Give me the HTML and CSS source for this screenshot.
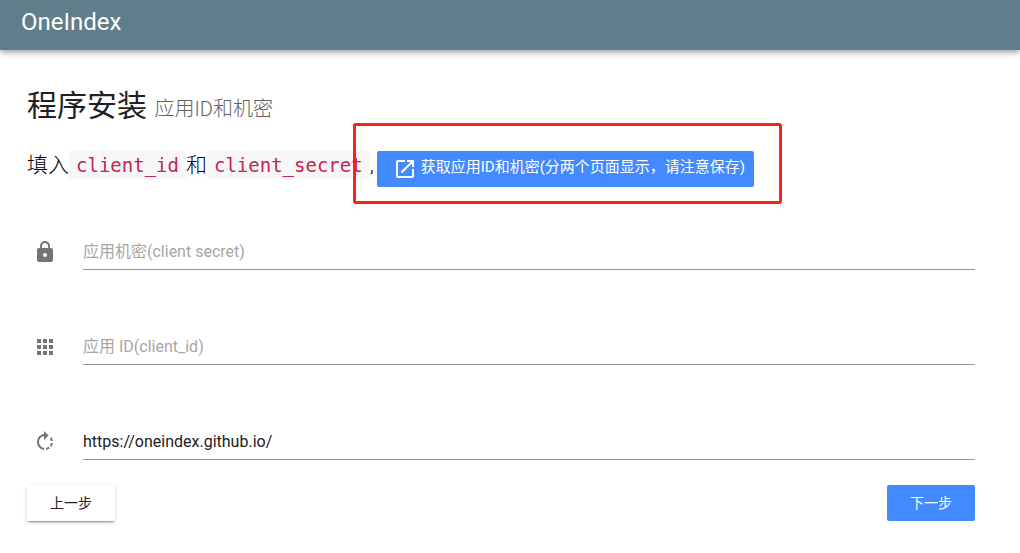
FILE: index.html
```html
<!DOCTYPE html>
<html lang="zh-CN">
<head>
<meta charset="utf-8">
<meta name="viewport" content="width=device-width, initial-scale=1">
<title>OneIndex</title>
<link rel="stylesheet" href="styles.css">
</head>
<body>
<header class="appbar"><a class="brand" href="#">OneIndex</a></header>
<main class="container">
  <h1 class="title">程序安装 <small>应用ID和机密</small></h1>
  <div class="lead">
    <span>填入</span><code>client_id</code><span>和</span><code>client_secret</code><span class="comma">,</span>
    <div class="highlight">
      <a class="btn btn-primary btn-link" href="#">
        <svg class="icon" viewBox="0 0 24 24" aria-hidden="true"><path d="M19 19H5V5h7V3H5a2 2 0 0 0-2 2v14a2 2 0 0 0 2 2h14c1.100 0 2-.9 2-2v-7h-2v7zM14 3v2h3.590l-9.830 9.830 1.410 1.410L19 6.410V10h2V3h-7z"/></svg>
        <span>获取应用ID和机密(分两个页面显示，请注意保存)</span>
      </a>
    </div>
  </div>
  <form class="form">
    <div class="field">
      <label for="secret" aria-label="应用机密"><svg class="icon" viewBox="0 0 24 24" aria-hidden="true"><path d="M18 8h-1V6c0-2.760-2.240-5-5-5S7 3.240 7 6v2H6c-1.100 0-2 .9-2 2v10c0 1.100.9 2 2 2h12c1.100 0 2-.9 2-2V10c0-1.100-.9-2-2-2zm-6 9c-1.100 0-2-.9-2-2s.9-2 2-2 2 .9 2 2-.9 2-2 2zm3.100-9H8.900V6c0-1.710 1.390-3.100 3.100-3.100 1.710 0 3.100 1.390 3.100 3.100v2z"/></svg></label>
      <input id="secret" type="text" placeholder="应用机密(client secret)">
    </div>
    <div class="field">
      <label for="client" aria-label="应用 ID"><svg class="icon" viewBox="0 0 24 24" aria-hidden="true"><path d="M4 8h4V4H4v4zm6 12h4v-4h-4v4zm-6 0h4v-4H4v4zm0-6h4v-4H4v4zm6 0h4v-4h-4v4zm6-10v4h4V4h-4zm-6 4h4V4h-4v4zm6 6h4v-4h-4v4zm0 6h4v-4h-4v4z"/></svg></label>
      <input id="client" type="text" placeholder="应用 ID(client_id)">
    </div>
    <div class="field">
      <label for="redirect" aria-label="回调地址"><svg class="icon" viewBox="0 0 24 24" aria-hidden="true"><path d="M15.550 5.550L11 1v3.070C7.060 4.560 4 7.920 4 12s3.050 7.440 7 7.930v-2.020c-2.840-.48-5-2.940-5-5.910s2.160-5.430 5-5.910V10l4.550-4.450zM19.930 11c-.17-1.390-.72-2.730-1.620-3.890l-1.420 1.420c.54.75.88 1.600 1.020 2.470h2.020zM13 17.900v2.020c1.390-.17 2.740-.71 3.900-1.610l-1.440-1.440c-.75.54-1.590.89-2.460 1.030zm3.890-2.420l1.420 1.410c.9-1.160 1.450-2.500 1.620-3.890h-2.020c-.14.87-.48 1.720-1.020 2.480z"/></svg></label>
      <input id="redirect" type="text" value="https://oneindex.github.io/">
    </div>
    <div class="actions">
      <button class="btn btn-raised" type="button">上一步</button>
      <button class="btn btn-primary" type="submit">下一步</button>
    </div>
  </form>
</main>
</body>
</html>
```
FILE: styles.css
```css
* { box-sizing: border-box; }
body {
  margin: 0;
  background: #fff;
  color: #212121;
  font-family: Roboto, "Noto Sans CJK SC", sans-serif;
}
.appbar {
  display: flex;
  align-items: center;
  height: 50px;
  padding: 0 21px 6px;
  background: #607d8b;
  box-shadow: 0 2px 4px -1px rgba(0,0,0,.2), 0 4px 5px rgba(0,0,0,.14), 0 1px 10px rgba(0,0,0,.12);
}
.brand { color: #fff; font-size: 24px; text-decoration: none; }
.container { padding: 32px 45px 32px 27px; }
.title { margin: 0; font-size: 30px; font-weight: 400; line-height: 48px; }
.title small { font-size: 20px; font-weight: 300; color: #616161; }
.lead { display: flex; align-items: flex-start; margin-top: 18px; font-size: 21px; font-weight: 300; line-height: 28px; color: #000; }
.lead code {
  padding: 0 7px;
  border-radius: 2px;
  background: #f7f7f9;
  color: #c7254e;
  font-family: "DejaVu Sans Mono", monospace;
  font-size: 19px;
  font-weight: 400;
}
.comma { margin-right: 3px; }
.highlight { position: relative; }
.highlight::after {
  content: "";
  position: absolute;
  inset: -28px -28px -17px -24px;
  border: 3px solid #ff2010;
  border-radius: 3px;
  pointer-events: none;
}
.btn {
  display: inline-flex;
  align-items: center;
  justify-content: center;
  min-width: 88px;
  height: 36px;
  padding: 0 16px;
  border: 0;
  border-radius: 2px;
  color: #212121;
  font: 400 14px/36px Roboto, "Noto Sans CJK SC", sans-serif;
  text-decoration: none;
  white-space: nowrap;
}
.btn-primary { background: #448aff; color: #fff; }
.btn-link { display: flex; gap: 4px; padding: 0 9px 0 16px; font-size: 15px; line-height: 32px; align-items: flex-start; }
.btn-link .icon { margin-top: 6px; }
.btn-raised {
  background: #fff;
  box-shadow: 0 3px 1px -2px rgba(0,0,0,.2), 0 2px 2px rgba(0,0,0,.14), 0 1px 5px rgba(0,0,0,.12);
}
.icon { display: block; width: 24px; height: 24px; fill: currentColor; }
.form { margin-top: 47px; }
.field { display: flex; align-items: center; gap: 26px; height: 36px; margin-bottom: 59px; }
.field label { padding-left: 6px; color: #757575; }
.field input {
  flex: 1;
  min-width: 0;
  height: 36px;
  padding: 0;
  border: 0;
  border-bottom: 1px solid #949494;
  outline: 0;
  background: transparent;
  color: #212121;
  font: 400 16px/24px Roboto, "Noto Sans CJK SC", sans-serif;
}
.field input::placeholder { color: #a6a6a6; opacity: 1; }
.actions { display: flex; justify-content: space-between; margin-top: -34px; }
```
